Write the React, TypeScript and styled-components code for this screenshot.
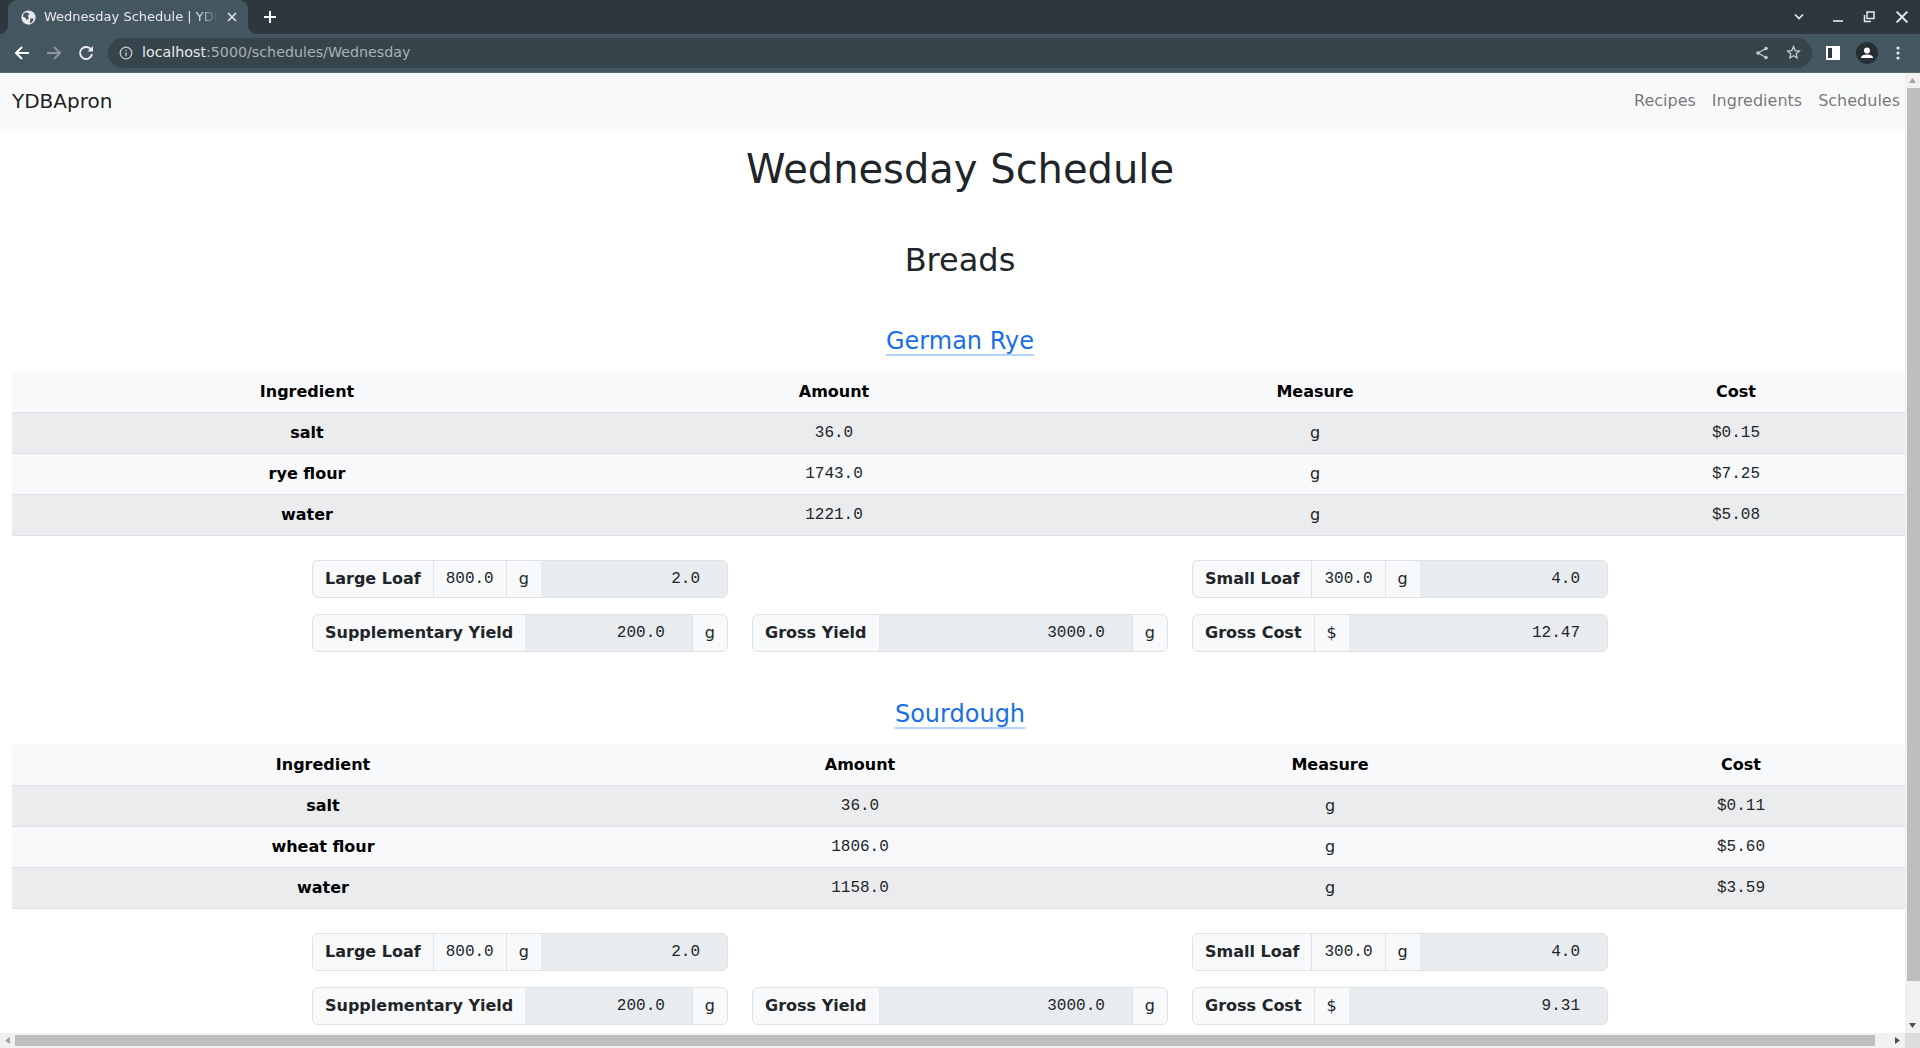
import React from 'react';
import styled, { createGlobalStyle } from 'styled-components';

const GlobalStyle = createGlobalStyle`
  html, body {
    margin: 0;
    height: 100%;
    overflow: hidden;
  }

  body {
    font-family: 'DejaVu Sans', sans-serif;
    font-size: 16px;
    line-height: 1.5;
    color: #212529;
    background: #fff;
  }

  * {
    box-sizing: border-box;
  }
`;

const Shell = styled.div`
  display: flex;
  flex-direction: column;
  width: 1920px;
  height: 1048px;
  overflow: hidden;
`;

const TabStrip = styled.div`
  display: flex;
  align-items: flex-end;
  height: 34px;
  padding-left: 8px;
  background: #2d383e;
`;

const Tab = styled.div`
  position: relative;
  display: flex;
  align-items: center;
  width: 240px;
  height: 34px;
  padding: 0 10px 0 13px;
  gap: 8px;
  background: #44565f;
  border-radius: 9px 9px 0 0;
  color: #e8eaed;
  font-size: 13px;

  &::before,
  &::after {
    content: '';
    position: absolute;
    bottom: 0;
    width: 8px;
    height: 8px;
  }

  &::before {
    left: -8px;
    background: radial-gradient(circle at 0 0, transparent 7.5px, #44565f 8px);
  }

  &::after {
    right: -8px;
    background: radial-gradient(circle at 100% 0, transparent 7.5px, #44565f 8px);
  }
`;

const TabTitle = styled.span`
  flex: 1;
  overflow: hidden;
  white-space: nowrap;
  mask-image: linear-gradient(to right, #000 88%, transparent);
`;

const NewTab = styled.div`
  display: flex;
  align-items: center;
  margin-left: 16px;
  height: 34px;
`;

const StripSpacer = styled.div`
  flex: 1;
`;

const WindowButtons = styled.div`
  display: flex;
  align-items: center;
  height: 34px;
  gap: 19px;
  padding-right: 10px;
`;

const ChevronSlot = styled.div`
  display: flex;
  margin-right: 9px;
`;

const Toolbar = styled.div`
  display: flex;
  align-items: center;
  height: 39px;
  padding: 0 18px 1px 14px;
  background: #44565f;
  border-bottom: 1px solid #5a6a72;
`;

const NavIcons = styled.div`
  display: flex;
  align-items: center;
  gap: 16px;
  margin-right: 14px;
`;

const Omnibox = styled.div`
  display: flex;
  align-items: center;
  flex: 1;
  height: 30px;
  padding: 0 11px;
  gap: 9px;
  border-radius: 15px;
  background: #36444b;
  font-size: 14.25px;
  color: #a9b2b7;
`;

const Host = styled.span`
  color: #e8eaed;
`;

const OmniActions = styled.div`
  display: flex;
  align-items: center;
  gap: 17px;
  margin-left: auto;
`;

const ToolIcons = styled.div`
  display: flex;
  align-items: center;
  gap: 16px;
  margin-left: 14px;
`;

const Middle = styled.div`
  display: flex;
  height: 960px;
`;

const Viewport = styled.div`
  width: 1905px;
  height: 960px;
  overflow: hidden;
  background: #fff;
`;

const Page = styled.div`
  width: 1920px;
`;

const Navbar = styled.nav`
  display: flex;
  align-items: center;
  justify-content: space-between;
  height: 56px;
  padding: 0 12px;
  background: #f8f9fa;
`;

const Brand = styled.a`
  font-size: 20px;
  color: rgba(0, 0, 0, 0.9);
`;

const NavLinks = styled.div`
  display: flex;
`;

const NavLink = styled.a`
  padding: 8px;
  color: rgba(0, 0, 0, 0.55);
`;

const PageTitle = styled.h1`
  margin: 16px 0 48px;
  font-size: 40px;
  font-weight: 500;
  line-height: 48px;
  text-align: center;
`;

const SectionTitle = styled.h2`
  margin: 0 0 45px;
  font-size: 32px;
  font-weight: 500;
  line-height: 38px;
  text-align: center;
`;

const RecipeSection = styled.section`
  margin-bottom: 45px;
`;

const RecipeTitle = styled.h3`
  margin: 0 0 14px;
  font-size: 24px;
  font-weight: 500;
  line-height: 34px;
  text-align: center;
`;

const RecipeLink = styled.a`
  color: #1a6fe6;
  text-decoration: underline;
  text-decoration-color: rgba(13, 110, 253, 0.3);
  text-decoration-thickness: 1.5px;
  text-decoration-skip-ink: none;
  text-underline-offset: 5px;
`;

const TableWrap = styled.div`
  padding: 0 12px;
`;

const Table = styled.table`
  width: 100%;
  table-layout: fixed;
  border-collapse: collapse;
  color: #000;
`;

const Col = styled.col<{ $w: number }>`
  width: ${(p) => p.$w}px;
`;

const HeadCell = styled.th`
  height: 40px;
  padding: 8px;
  background: #f8f9fa;
  border-bottom: 1px solid #dee2e6;
  font-weight: 700;
  text-align: center;
`;

const Row = styled.tr<{ $shade: boolean }>`
  background: ${(p) => (p.$shade ? '#ebecee' : '#f8f9fa')};
`;

const NameCell = styled.td`
  height: 41px;
  padding: 8px;
  border-bottom: 1px solid #dee2e6;
  font-weight: 700;
  text-align: center;
`;

const DataCell = styled.td<{ $mono?: boolean }>`
  height: 41px;
  padding: 8px;
  border-bottom: 1px solid #dee2e6;
  font-family: ${(p) => (p.$mono ? "'Liberation Mono', monospace" : "'DejaVu Sans', sans-serif")};
  color: #212529;
  text-align: center;
`;

const GroupGrid = styled.div`
  display: grid;
  grid-template-columns: repeat(3, 416px);
  gap: 16px 24px;
  width: 1296px;
  margin: 24px auto 0;
`;

const InputGroup = styled.div`
  display: flex;
  height: 38px;
  border: 1px solid #dee2e6;
  border-radius: 6px;
  overflow: hidden;
  background: #f8f9fa;
`;

const Label = styled.div`
  display: flex;
  align-items: center;
  padding: 0 12px;
  font-weight: 700;
`;

const Addon = styled.div`
  display: flex;
  align-items: center;
  padding: 0 12px;
  border-left: 1px solid #dee2e6;
  font-family: 'Liberation Mono', monospace;
`;

const Unit = styled.div`
  display: flex;
  align-items: center;
  padding: 0 12px;
  border-left: 1px solid #dee2e6;
`;

const Field = styled.div`
  display: flex;
  align-items: center;
  justify-content: flex-end;
  flex: 1;
  padding-right: 27px;
  background: #e9ecef;
  font-family: 'Liberation Mono', monospace;
`;

const VScroll = styled.div`
  display: flex;
  flex-direction: column;
  width: 15px;
  background: #f1f1f1;
`;

const ScrollArrow = styled.div`
  display: flex;
  align-items: center;
  justify-content: center;
  width: 15px;
  height: 15px;
  flex: none;
`;

const VThumb = styled.div`
  width: 13px;
  height: 893px;
  margin-left: 2px;
  background: #bebebe;
`;

const VRest = styled.div`
  flex: 1;
`;

const HScroll = styled.div`
  display: flex;
  height: 15px;
  background: #f1f1f1;
`;

const HThumb = styled.div`
  width: 1860px;
  height: 11px;
  margin-top: 2px;
  background: #bebebe;
`;

const HRest = styled.div`
  flex: 1;
`;

const Corner = styled.div`
  width: 15px;
  background: #dcdcdc;
`;

const Globe = () => (
  <svg width="15" height="15" viewBox="0 0 16 16">
    <circle cx="8" cy="8" r="7.6" fill="#e8eaed" />
    <path d="M3 3.5 6.5 2.5 9 4.5 7 6.5 8.5 8.5 6 11 5 8.5 2 7zM10 9l3.5 0L12 13l-2.5 1z" fill="#44565f" />
  </svg>
);

const Close = ({ size }: { size: number }) => (
  <svg width={size} height={size} viewBox="0 0 12 12">
    <path d="M2 2l8 8M10 2l-8 8" stroke="#e8eaed" strokeWidth="1.5" fill="none" />
  </svg>
);

const Plus = () => (
  <svg width="12" height="12" viewBox="0 0 12 12">
    <path d="M6 0v12M0 6h12" stroke="#fff" strokeWidth="2" />
  </svg>
);

const Chevron = () => (
  <svg width="10" height="8" viewBox="0 0 10 8">
    <path d="M1 1.5l4 4 4-4" stroke="#e8eaed" strokeWidth="1.7" fill="none" />
  </svg>
);

const Minimize = () => (
  <svg width="12" height="12" viewBox="0 0 12 12">
    <path d="M1 10h10" stroke="#e8eaed" strokeWidth="1.6" />
  </svg>
);

const Restore = () => (
  <svg width="12" height="12" viewBox="0 0 12 12">
    <path d="M4 1h7v6.5H4zM1.5 4v6.5H8" stroke="#e8eaed" strokeWidth="1.5" fill="none" />
  </svg>
);

const Arrow = ({ color, flip }: { color: string; flip?: boolean }) => (
  <svg width="16" height="16" viewBox="0 0 16 16">
    <path
      d={flip ? 'M1 8h13M8 2l6 6-6 6' : 'M15 8H2M8 2 2 8l6 6'}
      stroke={color}
      strokeWidth="2"
      fill="none"
    />
  </svg>
);

const Reload = () => (
  <svg width="16" height="16" viewBox="0 0 16 16">
    <path d="M13.3 5A6 6 0 1 0 14 9" stroke="#e8eaed" strokeWidth="1.9" fill="none" />
    <path d="M15 1v5.5H9.5z" fill="#e8eaed" />
  </svg>
);

const Info = () => (
  <svg width="14" height="14" viewBox="0 0 14 14">
    <circle cx="7" cy="7" r="5.8" stroke="#c5cbce" strokeWidth="1.3" fill="none" />
    <path d="M7 6.2v4M7 3.7v1.4" stroke="#c5cbce" strokeWidth="1.3" />
  </svg>
);

const Share = () => (
  <svg width="14" height="14" viewBox="0 0 14 14">
    <path d="M11 2.5 3 7l8 4.5" stroke="#c5cbce" strokeWidth="1.3" fill="none" />
    <circle cx="11" cy="2.5" r="1.8" fill="#c5cbce" />
    <circle cx="3" cy="7" r="1.8" fill="#c5cbce" />
    <circle cx="11" cy="11.5" r="1.8" fill="#c5cbce" />
  </svg>
);

const Star = () => (
  <svg width="15" height="15" viewBox="0 0 15 15">
    <path d="M7.5 1.6 9.2 5.6l4.3.4-3.3 2.8 1 4.2-3.7-2.2-3.7 2.2 1-4.2L1.5 6l4.3-.4z" stroke="#c5cbce" strokeWidth="1.3" fill="none" />
  </svg>
);

const SidePanel = () => (
  <svg width="14" height="14" viewBox="0 0 14 14">
    <path d="M0 0h14v14H0z" fill="#fff" />
    <path d="M2 2h4v10H2z" fill="#2f3b41" />
  </svg>
);

const Avatar = () => (
  <svg width="22" height="22" viewBox="0 0 22 22">
    <circle cx="11" cy="11" r="11" fill="#262f34" />
    <circle cx="11" cy="8.5" r="3" fill="#fff" />
    <path d="M5 16c0-2.4 3.2-3.4 6-3.4s6 1 6 3.4z" fill="#fff" />
  </svg>
);

const Dots = () => (
  <svg width="8" height="14" viewBox="0 0 8 14">
    <circle cx="4" cy="2" r="1.6" fill="#e8eaed" />
    <circle cx="4" cy="7" r="1.6" fill="#e8eaed" />
    <circle cx="4" cy="12" r="1.6" fill="#e8eaed" />
  </svg>
);

const Triangle = ({ d, color }: { d: string; color: string }) => (
  <svg width="9" height="9" viewBox="0 0 9 9">
    <path d={d} fill={color} />
  </svg>
);

type Recipe = {
  name: string;
  cols: number[];
  rows: [string, string, string][];
  cost: string;
};

const recipes: Recipe[] = [
  {
    name: 'German Rye',
    cols: [590, 464, 498, 344],
    rows: [
      ['salt', '36.0', '$0.15'],
      ['rye flour', '1743.0', '$7.25'],
      ['water', '1221.0', '$5.08'],
    ],
    cost: '12.47',
  },
  {
    name: 'Sourdough',
    cols: [622, 452, 488, 334],
    rows: [
      ['salt', '36.0', '$0.11'],
      ['wheat flour', '1806.0', '$5.60'],
      ['water', '1158.0', '$3.59'],
    ],
    cost: '9.31',
  },
];

const RecipeBlock = ({ recipe }: { recipe: Recipe }) => (
  <RecipeSection>
    <RecipeTitle>
      <RecipeLink>{recipe.name}</RecipeLink>
    </RecipeTitle>
    <TableWrap>
      <Table>
        <colgroup>
          {recipe.cols.map((w, i) => (
            <Col key={i} $w={w} />
          ))}
        </colgroup>
        <thead>
          <tr>
            <HeadCell>Ingredient</HeadCell>
            <HeadCell>Amount</HeadCell>
            <HeadCell>Measure</HeadCell>
            <HeadCell>Cost</HeadCell>
          </tr>
        </thead>
        <tbody>
          {recipe.rows.map((row, i) => (
            <Row key={row[0]} $shade={i % 2 === 0}>
              <NameCell>{row[0]}</NameCell>
              <DataCell $mono>{row[1]}</DataCell>
              <DataCell>g</DataCell>
              <DataCell $mono>{row[2]}</DataCell>
            </Row>
          ))}
        </tbody>
      </Table>
    </TableWrap>
    <GroupGrid>
      <InputGroup>
        <Label>Large Loaf</Label>
        <Addon>800.0</Addon>
        <Unit>g</Unit>
        <Field>2.0</Field>
      </InputGroup>
      <div />
      <InputGroup>
        <Label>Small Loaf</Label>
        <Addon>300.0</Addon>
        <Unit>g</Unit>
        <Field>4.0</Field>
      </InputGroup>
      <InputGroup>
        <Label>Supplementary Yield</Label>
        <Field>200.0</Field>
        <Unit>g</Unit>
      </InputGroup>
      <InputGroup>
        <Label>Gross Yield</Label>
        <Field>3000.0</Field>
        <Unit>g</Unit>
      </InputGroup>
      <InputGroup>
        <Label>Gross Cost</Label>
        <Unit>$</Unit>
        <Field>{recipe.cost}</Field>
      </InputGroup>
    </GroupGrid>
  </RecipeSection>
);

const App = () => {
  return (
    <Shell>
      <GlobalStyle />
      <TabStrip>
        <Tab>
          <Globe />
          <TabTitle>Wednesday Schedule | YDBApron</TabTitle>
          <Close size={12} />
        </Tab>
        <NewTab>
          <Plus />
        </NewTab>
        <StripSpacer />
        <WindowButtons>
          <ChevronSlot>
            <Chevron />
          </ChevronSlot>
          <Minimize />
          <Restore />
          <Close size={16} />
        </WindowButtons>
      </TabStrip>
      <Toolbar>
        <NavIcons>
          <Arrow color="#ffffff" />
          <Arrow color="#8b979d" flip />
          <Reload />
        </NavIcons>
        <Omnibox>
          <Info />
          <span>
            <Host>localhost</Host>:5000/schedules/Wednesday
          </span>
          <OmniActions>
            <Share />
            <Star />
          </OmniActions>
        </Omnibox>
        <ToolIcons>
          <SidePanel />
          <Avatar />
          <Dots />
        </ToolIcons>
      </Toolbar>
      <Middle>
        <Viewport>
          <Page>
            <Navbar>
              <Brand>YDBApron</Brand>
              <NavLinks>
                <NavLink>Recipes</NavLink>
                <NavLink>Ingredients</NavLink>
                <NavLink>Schedules</NavLink>
              </NavLinks>
            </Navbar>
            <PageTitle>Wednesday Schedule</PageTitle>
            <SectionTitle>Breads</SectionTitle>
            {recipes.map((r) => (
              <RecipeBlock key={r.name} recipe={r} />
            ))}
          </Page>
        </Viewport>
        <VScroll>
          <ScrollArrow>
            <Triangle d="M4.5 2 8 7H1z" color="#a3a3a3" />
          </ScrollArrow>
          <VThumb />
          <VRest />
          <ScrollArrow>
            <Triangle d="M4.5 7 8 2H1z" color="#505050" />
          </ScrollArrow>
        </VScroll>
      </Middle>
      <HScroll>
        <ScrollArrow>
          <Triangle d="M2 4.5 7 1v7z" color="#a3a3a3" />
        </ScrollArrow>
        <HThumb />
        <HRest />
        <ScrollArrow>
          <Triangle d="M7 4.5 2 1v7z" color="#505050" />
        </ScrollArrow>
        <Corner />
      </HScroll>
    </Shell>
  );
};

export default App;
